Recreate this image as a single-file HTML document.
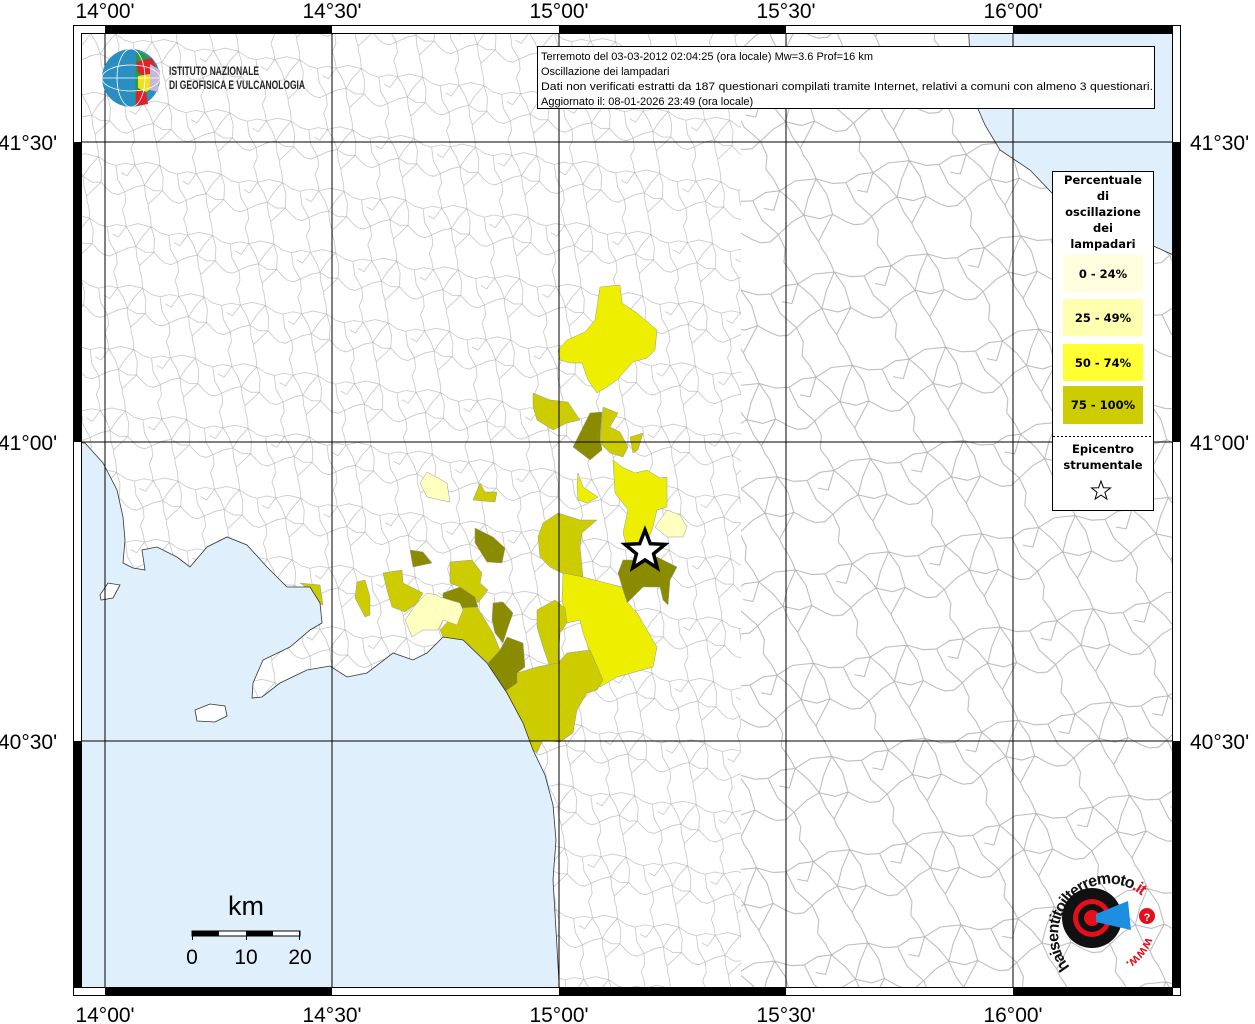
<!DOCTYPE html>
<html><head><meta charset="utf-8"><style>
html,body{margin:0;padding:0;background:#fff;width:1255px;height:1024px;overflow:hidden}
svg{display:block}
</style></head><body>
<svg width="1255" height="1024" viewBox="0 0 1255 1024" xmlns="http://www.w3.org/2000/svg" font-family="Liberation Sans, sans-serif">
<defs>
<clipPath id="mc"><rect x="81" y="33" width="1092" height="955"/></clipPath>
<g id="tile" fill="none" stroke="#b4b4b4" stroke-width="1">
<path d="M20,0 L26,12 L30,25 M65,0 L68,10 L70,20 M30,25 L48,18 L70,20 M0,30 L15,24 L30,25 M30,25 L42,40 L50,55 M70,20 L58,38 L50,55 M70,20 L78,38 L80,60 M70,20 L86,28 L100,30 M80,60 L92,70 L100,75 M50,55 L66,62 L80,60 M50,55 L36,60 L20,70 M20,70 L10,76 L0,75 M20,70 L24,86 L20,100 M50,55 L54,72 L60,85 M60,85 L62,94 L65,100 M60,85 L72,70 L80,60 M0,30 L6,52 L20,70 M30,25 L20,44 L10,40"/>
</g>
<pattern id="pd" patternUnits="userSpaceOnUse" width="100" height="100" patternTransform="translate(13,7) rotate(8) scale(0.62)"><use href="#tile"/></pattern>
<pattern id="ps" patternUnits="userSpaceOnUse" width="100" height="100" patternTransform="translate(40,20) rotate(-11) scale(0.95)"><use href="#tile"/></pattern>
</defs>
<rect x="81" y="33" width="1092" height="955" fill="#fff"/>
<g clip-path="url(#mc)">
<rect x="81" y="33" width="660" height="955" fill="url(#pd)"/>
<rect x="741" y="33" width="432" height="955" fill="url(#ps)"/>
<g stroke="#999" stroke-width="0.5">
<polygon fill="#eeee00" points="600,287 620,285 622,303 637,313 657,330 655,350 647,358 633,362 617,380 607,387 597,393 588,380 582,363 570,363 560,360 558,350 567,340 585,332 595,320 598,300"/>
<polygon fill="#cccc00" points="533,393 550,400 568,402 580,420 567,423 553,430 537,420 533,407"/>
<polygon fill="#8b8b00" points="590,413 602,412 600,437 602,450 590,460 573,447 580,433"/>
<polygon fill="#cccc00" points="603,407 618,413 610,427 620,432 628,447 623,457 610,453 600,443"/>
<polygon fill="#cccc00" points="630,437 643,433 638,450 633,453"/>
<polygon fill="#eeee00" points="578,473 583,487 598,497 587,503 578,500 577,487"/>
<polygon fill="#eeee00" points="613,460 622,467 635,473 647,470 660,478 667,477 667,507 657,510 653,527 647,543 627,547 623,533 628,510 615,493"/>
<polygon fill="#ffffc0" points="655,527 667,510 680,515 687,527 683,537 667,537"/>
<polygon fill="#8b8b00" points="623,560 640,560 657,557 677,567 670,580 668,605 663,600 660,587 643,587 627,603 618,573"/>
<polygon fill="#cccc00" points="543,523 558,513 580,520 597,520 582,533 580,547 583,577 573,577 562,573 550,567 540,557 538,537"/>
<polygon fill="#eeee00" points="563,573 583,577 622,587 627,602 637,613 657,647 653,667 617,677 600,687 593,660 583,633 580,620 567,623 562,600"/>
<polygon fill="#cccc00" points="537,610 555,600 565,608 567,623 560,633 558,663 550,667 543,647 537,627"/>
<polygon fill="#cccc00" points="490,680 517,673 537,667 558,663 567,653 590,650 603,680 597,690 587,693 577,710 573,733 560,742 543,740 537,753 527,747 510,720 495,697"/>
<polygon fill="#8b8b00" points="507,637 523,643 525,667 517,673 517,683 503,693 488,663 500,650"/>
<polygon fill="#8b8b00" points="493,603 503,602 513,613 507,630 503,643 495,633 492,620"/>
<polygon fill="#cccc00" points="440,630 460,608 477,607 493,633 500,650 488,663 467,643 443,637"/>
<polygon fill="#8b8b00" points="443,593 460,587 475,597 478,607 460,608 443,602"/>
<polygon fill="#ffffc0" points="440,597 460,603 463,610 457,625 443,620 438,630 423,630 412,637 405,620 417,603 427,593 437,595"/>
<polygon fill="#cccc00" points="450,562 472,560 482,573 480,583 488,590 478,603 475,597 460,587 450,583"/>
<polygon fill="#cccc00" points="383,573 402,570 403,583 423,593 417,603 405,612 392,607 387,590"/>
<polygon fill="#cccc00" points="357,582 365,580 370,597 370,615 365,617 355,598"/>
<polygon fill="#8b8b00" points="410,550 423,552 432,563 413,567"/>
<polygon fill="#8b8b00" points="475,528 493,537 505,548 502,563 487,562 475,543"/>
<polygon fill="#ffffc0" points="427,472 447,483 450,502 440,500 427,497 420,483"/>
<polygon fill="#cccc00" points="480,483 485,492 497,492 495,502 473,500"/>
<polygon fill="#cccc00" points="300,583 320,585 323,605 317,603 310,590"/>
</g>
<polygon fill="#dff0fc" stroke="#333" stroke-width="0.8" points="60,443 85,443 103,463 117,490 123,517 125,540 123,563 133,568 145,570 142,550 157,547 177,557 190,567 207,547 227,537 247,545 267,567 287,587 310,587 320,603 322,623 310,630 290,647 263,660 253,683 252,698 262,697 280,683 307,670 330,666 347,677 367,673 393,653 413,660 427,653 443,637 463,640 487,663 507,693 523,723 533,750 545,775 553,805 556,840 553,880 556,930 560,1000 60,1000"/>
<polygon fill="#fff" stroke="#333" stroke-width="0.8" points="195,710 210,704 225,706 227,716 215,722 197,721"/>
<polygon fill="#fff" stroke="#333" stroke-width="0.8" points="100,595 108,583 120,585 113,598 101,600"/>
<polygon fill="#dff0fc" stroke="#333" stroke-width="0.8" points="968,20 972,95 985,125 1000,150 1030,170 1052,193 1100,215 1140,240 1180,258 1180,20"/>
<g stroke="#000" stroke-width="1">
<line x1="105" y1="33" x2="105" y2="988"/><line x1="332" y1="33" x2="332" y2="988"/><line x1="559" y1="33" x2="559" y2="988"/><line x1="786" y1="33" x2="786" y2="988"/><line x1="1013" y1="33" x2="1013" y2="988"/>
<line x1="81" y1="142" x2="1173" y2="142"/><line x1="81" y1="442" x2="1173" y2="442"/><line x1="81" y1="741" x2="1173" y2="741"/>
</g>
</g>
<rect x="73.5" y="25.5" width="1107" height="970" fill="none" stroke="#000"/>
<rect x="81.5" y="33.5" width="1091" height="954" fill="none" stroke="#000"/>
<g fill="#000">
<rect x="105" y="25" width="227" height="8"/><rect x="559" y="25" width="227" height="8"/><rect x="1013" y="25" width="160" height="8"/>
<rect x="105" y="988" width="227" height="8"/><rect x="559" y="988" width="227" height="8"/><rect x="1013" y="988" width="160" height="8"/>
<rect x="73" y="142" width="8" height="300"/><rect x="73" y="741" width="8" height="247"/>
<rect x="1173" y="142" width="8" height="300"/><rect x="1173" y="741" width="8" height="247"/>
</g>
<g font-size="21" fill="#000" text-anchor="middle">
<text x="105" y="18">14°00'</text><text x="332" y="18">14°30'</text><text x="559" y="18">15°00'</text><text x="786" y="18">15°30'</text><text x="1013" y="18">16°00'</text>
<text x="105" y="1022">14°00'</text><text x="332" y="1022">14°30'</text><text x="559" y="1022">15°00'</text><text x="786" y="1022">15°30'</text><text x="1013" y="1022">16°00'</text>
</g>
<g font-size="21" fill="#000">
<text x="-2" y="150">41°30'</text><text x="-2" y="450">41°00'</text><text x="-2" y="749">40°30'</text>
<text x="1190" y="150">41°30'</text><text x="1190" y="450">41°00'</text><text x="1190" y="749">40°30'</text>
</g>
<rect x="537.5" y="46.5" width="617" height="62" fill="#fff" stroke="#000"/>
<g font-size="11" fill="#000">
<text x="541" y="60">Terremoto del 03-03-2012 02:04:25 (ora locale) Mw=3.6 Prof=16 km</text>
<text x="541" y="75">Oscillazione dei lampadari</text>
<text x="541" y="90" textLength="612" lengthAdjust="spacingAndGlyphs">Dati non verificati estratti da 187 questionari compilati tramite Internet, relativi a comuni con almeno 3 questionari.</text>
<text x="541" y="105">Aggiornato il: 08-01-2026 23:49 (ora locale)</text>
</g>
<circle cx="131" cy="78" r="29" fill="#2a8fc0"/>
<path d="M136,52 A29,29 0 0 1 160,80 L150,90 L140,100 L135,106 Z" fill="#2a9a3a"/>
<path d="M136,62 L152,58 L158,72 L146,78 L138,72Z" fill="#e0202a"/>
<path d="M138,76 L150,74 L156,86 L146,92 L138,88Z" fill="#f0e020"/>
<path d="M136,90 L146,92 L148,104 L136,106Z" fill="#e0202a"/>
<path d="M150,64 L160,70 L158,92 L150,90Z" fill="#c8b8d8"/>
<g stroke="#fff" stroke-width="0.8" fill="none"><ellipse cx="131" cy="78" rx="14" ry="29"/><line x1="102" y1="78" x2="160" y2="78"/><ellipse cx="131" cy="78" rx="29" ry="13"/></g>
<g font-size="12" fill="#222" font-weight="bold">
<text x="169" y="75" textLength="90" lengthAdjust="spacingAndGlyphs">ISTITUTO NAZIONALE</text>
<text x="169" y="89" textLength="136" lengthAdjust="spacingAndGlyphs">DI GEOFISICA E VULCANOLOGIA</text></g>
<rect x="1052.5" y="171.5" width="101" height="339" fill="#fff" stroke="#000"/>
<g font-family="DejaVu Sans, sans-serif" font-weight="bold" font-size="11.5" fill="#000" text-anchor="middle">
<text x="1103" y="184">Percentuale</text><text x="1103" y="200">di</text><text x="1103" y="216">oscillazione</text><text x="1103" y="232">dei</text><text x="1103" y="248">lampadari</text>
<rect x="1063" y="255" width="80" height="37" fill="#ffffe0"/><text x="1103" y="278">0 - 24%</text>
<rect x="1063" y="299" width="80" height="37" fill="#ffffb0"/><text x="1103" y="322">25 - 49%</text>
<rect x="1063" y="344" width="80" height="37" fill="#ffff33"/><text x="1103" y="367">50 - 74%</text>
<rect x="1063" y="386" width="80" height="38" fill="#cccc00"/><text x="1103" y="409">75 - 100%</text>
<text x="1103" y="453">Epicentro</text><text x="1103" y="469">strumentale</text>
</g>
<line x1="1053" y1="436.5" x2="1153" y2="436.5" stroke="#000" stroke-dasharray="2,2"/>
<polygon points="1101,481 1103.4,487.7 1110.5,487.9 1104.9,492.3 1106.9,499.1 1101,495.1 1095.1,499.1 1097.1,492.3 1091.5,487.9 1098.6,487.7" fill="#fff" stroke="#000"/>
<polygon points="645,530 650.3,543.7 665,544.4 653.6,553.8 657.3,568 645,560 632.7,568 636.4,553.8 625,544.4 639.7,543.7" fill="#fff" stroke="#000" stroke-width="3.5"/>
<text x="246" y="915" font-size="27" text-anchor="middle">km</text>
<rect x="192" y="931" width="108" height="5" fill="#fff" stroke="#000" stroke-width="1"/>
<rect x="192" y="931" width="27" height="5"/><rect x="246" y="931" width="27" height="5"/>
<g stroke="#000"><line x1="192.5" y1="931" x2="192.5" y2="940"/><line x1="246.5" y1="931" x2="246.5" y2="940"/><line x1="299.5" y1="931" x2="299.5" y2="940"/></g>
<g font-size="21" text-anchor="middle"><text x="192" y="964">0</text><text x="246" y="964">10</text><text x="300" y="964">20</text></g>
<circle cx="1092" cy="918" r="30" fill="#111"/>
<circle cx="1092" cy="918" r="19" fill="#e3101c"/>
<circle cx="1092" cy="918" r="14" fill="#111"/>
<circle cx="1092" cy="918" r="8" fill="#e3101c"/>
<path d="M1096,914 L1128,901 L1131,930 L1096,922Z" fill="#1e8fe0"/>
<circle cx="1147" cy="916" r="8" fill="#e3101c"/><text x="1147" y="921" font-size="11" fill="#fff" text-anchor="middle" font-weight="bold">?</text>
<path id="arc" d="M1070,967 A50,50 0 1 1 1148,902" fill="none"/>
<text font-size="16" font-weight="bold" fill="#111" letter-spacing="-1"><textPath href="#arc">haisentitoilterremoto<tspan fill="#e3101c">.it</tspan></textPath></text>
<path id="arc2" d="M1146,937 A50,50 0 0 1 1100,970" fill="none"/>
<text font-size="13" font-weight="bold" fill="#e3101c"><textPath href="#arc2">www.</textPath></text>
</svg>
</body></html>
